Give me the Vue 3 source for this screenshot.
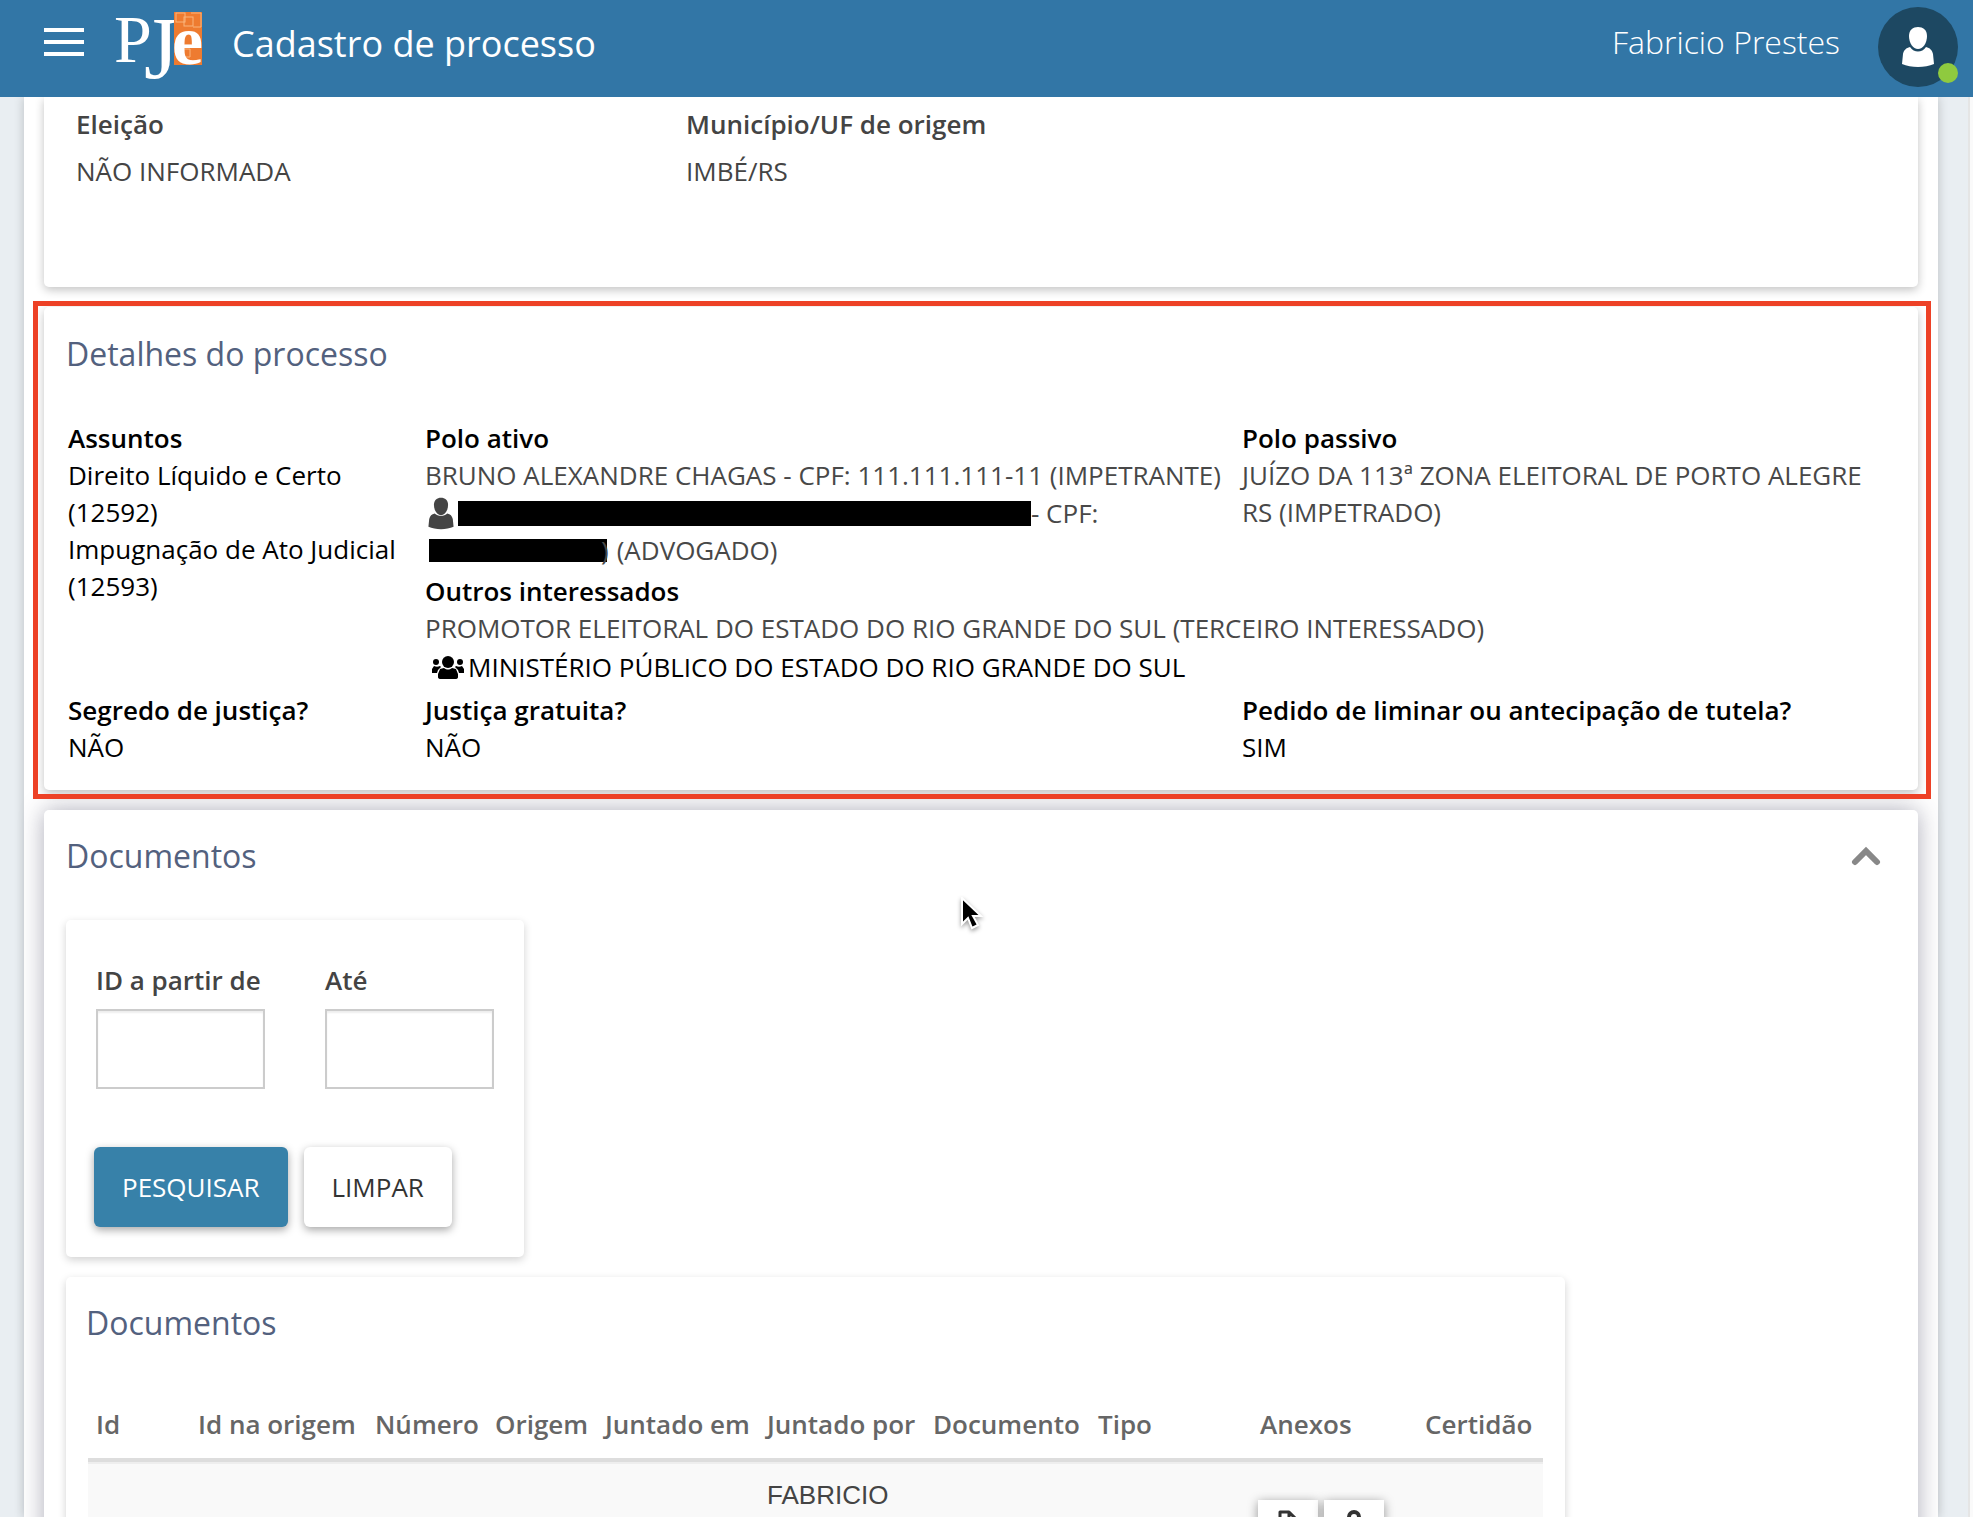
<script setup>
import { ref } from 'vue'

const idFrom = ref('')
const idTo = ref('')
const docsOpen = ref(true)

const columns = [
  { label: 'Id', width: 102 },
  { label: 'Id na origem', width: 177 },
  { label: 'Número', width: 120 },
  { label: 'Origem', width: 110 },
  { label: 'Juntado em', width: 162 },
  { label: 'Juntado por', width: 166 },
  { label: 'Documento', width: 165 },
  { label: 'Tipo', width: 162 },
  { label: 'Anexos', width: 165 },
  { label: 'Certidão', width: 126 },
]

function clearFilter() {
  idFrom.value = ''
  idTo.value = ''
}
</script>

<template>
  <div class="shell">
    <header class="topbar">
      <button class="menu" type="button" aria-label="Menu"><i></i><i></i><i></i></button>
      <svg class="logo" width="90" height="76" viewBox="0 0 90 76" role="img" aria-label="PJe">
        <text x="0" y="55" font-size="68">P</text>
        <text x="30" y="71" font-size="88">J</text>
        <rect x="60" y="5" width="28" height="53" fill="#ee7b30" />
        <g fill="none" stroke="#f9b57c" stroke-width="1">
          <rect x="62" y="6" width="9" height="9" />
          <rect x="70" y="10" width="9" height="9" />
          <path d="M77 6h10v14h-8M68 42h8v8h-8z" />
        </g>
        <text x="58" y="57" font-size="70" font-weight="700">e</text>
      </svg>
      <h1>Cadastro de processo</h1>
      <span class="user">Fabricio Prestes</span>
      <button class="avatar" type="button" aria-label="Conta do usuário">
        <svg width="34" height="42" viewBox="0 0 34 42">
          <path d="M17 1c5 0 9 3 9 9 0 7-4 13-9 13S8 17 8 10c0-6 4-9 9-9z" />
          <path d="M9 21c4 6 12 6 16 0 4 1 6 3 7 7l1 10c-9 4-23 4-32 0l1-10c1-4 3-6 7-7z" />
        </svg>
        <span class="status"></span>
      </button>
    </header>

    <main class="page">
      <section class="card origin">
        <dl>
          <div><dt>Eleição</dt><dd>NÃO INFORMADA</dd></div>
          <div><dt>Município/UF de origem</dt><dd>IMBÉ/RS</dd></div>
        </dl>
      </section>

      <section class="card details">
        <h2>Detalhes do processo</h2>
        <div class="grid">
          <div class="subjects">
            <h3>Assuntos</h3>
            <p>Direito Líquido e Certo (12592)</p>
            <p>Impugnação de Ato Judicial (12593)</p>
          </div>
          <div class="muted">
            <h3>Polo ativo</h3>
            <p class="line">BRUNO ALEXANDRE CHAGAS - CPF: 111.111.111-11 (IMPETRANTE)</p>
            <p class="line lawyer">
              <svg class="person" width="28" height="33" viewBox="0 0 34 42" aria-hidden="true">
                <path d="M17 1c5 0 9 3 9 9 0 7-4 13-9 13S8 17 8 10c0-6 4-9 9-9z" />
                <path d="M9 21c4 4 12 4 16 0 4 1 6 3 7 7l1 10c-9 4-23 4-32 0l1-10c1-4 3-6 7-7z" />
              </svg>
              <span class="redacted name"></span>- CPF:
            </p>
            <p class="line lawyer"><span class="redacted cpf"></span><span class="tail">)</span>(ADVOGADO)</p>
          </div>
          <div class="muted passive">
            <h3>Polo passivo</h3>
            <p>JUÍZO DA 113ª ZONA ELEITORAL DE PORTO ALEGRE RS (IMPETRADO)</p>
          </div>
          <div class="others">
            <h3>Outros interessados</h3>
            <p class="promoter">PROMOTOR ELEITORAL DO ESTADO DO RIO GRANDE DO SUL (TERCEIRO INTERESSADO)</p>
            <p class="office">
              <svg width="34" height="24" viewBox="0 0 34 24" aria-hidden="true">
                <circle cx="5" cy="6" r="3" /><circle cx="29" cy="6" r="3" /><circle cx="17" cy="6" r="6" />
                <path d="M9 13l4-1c3 2 5 2 8 0l4 1 2 5v3q0 2-3 2H10q-3 0-3-2v-3zM1 17v-4l2-3c2 1 4 1 6 0l1 1-3 3-1 3zM33 17v-4l-2-3c-2 1-4 1-6 0l-1 1 3 3 1 3z" />
              </svg>
              MINISTÉRIO PÚBLICO DO ESTADO DO RIO GRANDE DO SUL
            </p>
          </div>
          <div><h3>Segredo de justiça?</h3><p>NÃO</p></div>
          <div><h3>Justiça gratuita?</h3><p>NÃO</p></div>
          <div><h3>Pedido de liminar ou antecipação de tutela?</h3><p>SIM</p></div>
        </div>
      </section>

      <section class="card documents">
        <div class="docs-head">
          <h2>Documentos</h2>
          <button class="toggle" type="button" aria-label="Recolher documentos" @click="docsOpen = !docsOpen">
            <svg width="30" height="20" viewBox="0 0 30 20">
              <path d="M4 16L15 5l11 11" fill="none" stroke="#888" stroke-width="6" stroke-linecap="round" />
            </svg>
          </button>
        </div>
        <div v-show="docsOpen">
          <form class="filter" @submit.prevent>
            <div class="fields">
              <label>ID a partir de<input v-model="idFrom" type="text" /></label>
              <label>Até<input v-model="idTo" type="text" /></label>
            </div>
            <div class="actions">
              <button class="btn primary" type="submit">PESQUISAR</button>
              <button class="btn" type="button" @click="clearFilter">LIMPAR</button>
            </div>
          </form>

          <section class="list">
            <h2>Documentos</h2>
            <table>
              <colgroup>
                <col v-for="c in columns" :key="c.label" :style="{ width: c.width + 'px' }" />
              </colgroup>
              <thead>
                <tr><th v-for="c in columns" :key="c.label" scope="col">{{ c.label }}</th></tr>
              </thead>
              <tbody>
                <tr>
                  <td></td><td></td><td></td><td></td><td></td>
                  <td>FABRICIO</td>
                  <td></td><td></td>
                  <td class="files">
                    <button type="button" aria-label="Abrir documento">
                      <svg width="20" height="24" viewBox="0 0 20 24">
                        <path d="M2 22V2h9l7 7v13zM11 2v7h7" fill="none" stroke="#333" stroke-width="3" stroke-linejoin="round" />
                      </svg>
                    </button>
                    <button type="button" aria-label="Documento sigiloso">
                      <svg width="20" height="24" viewBox="0 0 20 24">
                        <path d="M5 12V7a5 5 0 0 1 10 0v5" fill="none" stroke="#333" stroke-width="4" />
                        <rect x="1" y="11" width="18" height="12" rx="2" fill="#333" />
                      </svg>
                    </button>
                  </td>
                  <td></td>
                </tr>
              </tbody>
            </table>
          </section>
        </div>
      </section>
    </main>

    <svg class="pointer" width="24" height="36" viewBox="0 0 24 36" aria-hidden="true">
      <path d="M2 1v26l6-6 4 10 6-3-5-9h8z" fill="#000" stroke="#fff" stroke-width="2" />
    </svg>
  </div>
</template>

<style>
body {
  margin: 0;
  background: #e9eef2;
}
</style>

<style scoped>
* {
  box-sizing: border-box;
}
.shell {
  position: relative;
  height: 100vh;
  overflow: hidden;
  display: flex;
  flex-direction: column;
  background: linear-gradient(to left, #fafafa 3px, #e5e5e5 3px 5px, #e9eef2 5px);
  color: #000;
  font: 26px/37px "Open Sans", "Noto Sans", sans-serif;
}
h1, h2, h3, p, dl, dd {
  margin: 0;
  font-weight: 400;
}
button {
  padding: 0;
  border: 0;
  background: none;
  font: inherit;
  cursor: pointer;
}
.topbar {
  position: relative;
  z-index: 2;
  flex: none;
  display: flex;
  align-items: center;
  height: 97px;
  padding: 0 15px 0 44px;
  background: #3276a6;
  color: #fff;
}
.menu {
  display: grid;
  gap: 8px;
  width: 40px;
  margin-bottom: 14px;
}
.menu i {
  height: 4px;
  background: #fff;
}
.logo {
  overflow: visible;
  margin: 0 28px 8px 30px;
  fill: #fff;
  font-family: "Liberation Serif", serif;
}
h1 {
  margin-bottom: 10px;
  font-size: 36px;
  line-height: 48px;
}
.user {
  margin: 0 38px 14px auto;
  font-size: 32px;
  line-height: 44px;
  font-weight: 300;
}
.avatar {
  position: relative;
  display: grid;
  place-items: center;
  width: 80px;
  height: 80px;
  margin-bottom: 4px;
  border-radius: 50%;
  background: #1d4862;
}
.avatar svg {
  fill: #fff;
}
.status {
  position: absolute;
  right: 0;
  bottom: 4px;
  width: 20px;
  height: 20px;
  border-radius: 50%;
  background: #8fca3f;
}
.page {
  flex: 1;
  min-height: 0;
  display: flex;
  flex-direction: column;
  gap: 20px;
  margin: 0 35px 0 24px;
  padding: 0 20px;
  background: #fff;
  box-shadow: 0 0 10px rgba(0, 0, 0, 0.2);
}
.card {
  flex: none;
  padding: 24px 22px;
  border-radius: 5px;
  background: #fff;
  box-shadow: 0 3px 10px rgba(0, 0, 0, 0.24);
}
.origin {
  padding: 9px 32px 97px;
  border-radius: 0 0 5px 5px;
  color: #444;
}
.origin dl {
  display: grid;
  grid-template-columns: 610fr 1200fr;
}
.origin dt {
  margin-bottom: 10px;
}
.origin dt, h3, label, th {
  font-weight: 600;
}
h2 {
  color: #53617e;
  font-size: 32px;
  line-height: 44px;
}
h3 {
  font-size: 26px;
}
.details {
  position: relative;
  z-index: 1;
  padding-top: 25px;
}
.details::after {
  content: "";
  position: absolute;
  inset: -6px -13px -9px -11px;
  border: 5px solid #ed4126;
  pointer-events: none;
}
.grid {
  display: grid;
  grid-template-columns: 357fr 817fr 654fr;
  margin: 44px 0 0 2px;
}
.subjects {
  grid-row: span 2;
  padding-right: 16px;
}
.muted p, .promoter {
  color: #484848;
}
.muted {
  padding-bottom: 4px;
}
.passive {
  padding-right: 24px;
}
.line {
  white-space: nowrap;
}
.lawyer {
  display: flex;
  align-items: center;
}
.person {
  margin: 3px 3px 2px 2px;
  fill: #444;
}
.redacted {
  background: #000;
}
.name {
  width: 573px;
  height: 25px;
}
.cpf {
  width: 178px;
  height: 23px;
  margin-left: 4px;
}
.tail {
  margin: 0 8px 0 -6px;
}
.others {
  grid-column: 2 / 4;
  padding-bottom: 6px;
}
.office {
  display: flex;
  align-items: center;
  gap: 3px;
  padding: 2px 0 0 6px;
}
.documents {
  box-shadow: 0 0 24px rgba(50, 50, 80, 0.4);
}
.docs-head {
  display: flex;
  justify-content: space-between;
  align-items: center;
  margin-bottom: 42px;
}
.toggle {
  display: grid;
  margin-right: 15px;
}
.filter {
  width: 458px;
  padding: 42px 28px 30px;
  border-radius: 5px;
  box-shadow: 0 3px 9px rgba(0, 0, 0, 0.18);
}
.fields {
  display: flex;
  gap: 60px;
  padding: 0 2px;
}
label {
  display: grid;
  gap: 10px;
  color: #444;
  white-space: nowrap;
}
input {
  width: 169px;
  height: 80px;
  padding: 0 16px;
  border: 2px solid #ccc;
  background: #fff;
  box-shadow: inset 0 2px 2px rgba(0, 0, 0, 0.07);
  font: inherit;
}
.actions {
  display: flex;
  gap: 16px;
  margin-top: 58px;
}
.btn {
  height: 80px;
  padding: 0 28px;
  border-radius: 6px;
  background: #fff;
  color: #333;
  box-shadow: 0 3px 9px rgba(0, 0, 0, 0.35);
}
.primary {
  background: #3781a9;
  color: #fff;
}
.list {
  width: 1499px;
  margin-top: 20px;
  padding: 24px 22px 24px 20px;
  border-radius: 5px;
  box-shadow: 0 3px 9px rgba(0, 0, 0, 0.18);
}
table {
  width: 1455px;
  margin: 50px 0 0 2px;
  border-collapse: separate;
  border-spacing: 0;
  table-layout: fixed;
  text-align: left;
}
th {
  padding: 11px 8px 15px;
  border-bottom: 4px solid #ddd;
  color: #666;
  white-space: nowrap;
}
td {
  padding: 13px 8px;
  border-top: 2px solid #eee;
  background: #f9f9f9;
  color: #444;
  font-family: "Liberation Sans", Arial, sans-serif;
  vertical-align: top;
}
.files {
  padding: 36px 6px;
  white-space: nowrap;
}
.files button {
  width: 60px;
  height: 60px;
  margin-right: 6px;
  background: #fff;
  box-shadow: 0 2px 10px rgba(0, 0, 0, 0.4);
}
.files button + button {
  margin: 0;
}
.files svg {
  display: block;
  margin: 0 auto 16px;
}
.pointer {
  position: absolute;
  z-index: 3;
  left: 960px;
  top: 897px;
  filter: drop-shadow(0 2px 2px rgba(0, 0, 0, 0.4));
}
</style>
